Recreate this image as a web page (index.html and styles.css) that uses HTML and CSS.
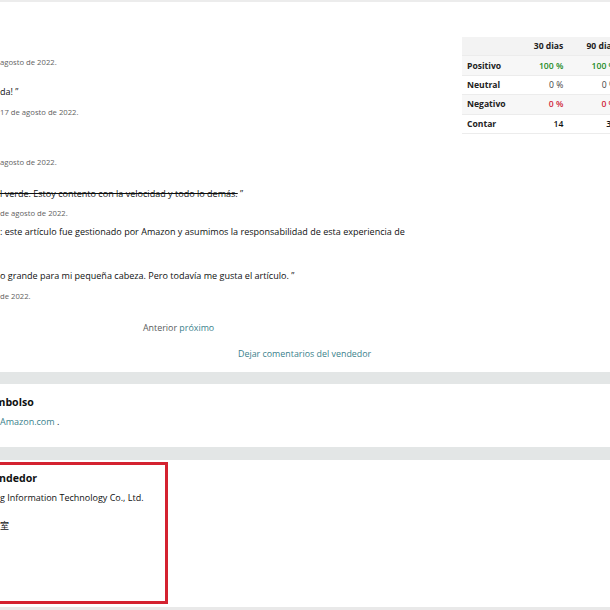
FILE: index.html
```html
<!DOCTYPE html>
<html lang="es">
<head>
<meta charset="utf-8">
<link rel="stylesheet" href="styles.css">
</head>
<body>
<div class="page">
  <section class="feedback">
    <div class="list">
      <p class="date first">agosto de 2022.</p>
      <p class="quote gap12">da! ”</p>
      <p class="date gap2">17 de agosto de 2022.</p>
      <p class="date gap32">agosto de 2022.</p>
      <p class="quote gap14"><span class="strike">l verde. Estoy contento con la velocidad y todo lo demás.</span> ”</p>
      <p class="date gap1">de agosto de 2022.</p>
      <p class="quote gap1">: este artículo fue gestionado por Amazon y asumimos la responsabilidad de esta experiencia de</p>
      <p class="quote gap26">o grande para mi pequeña cabeza. Pero todavía me gusta el artículo. ”</p>
      <p class="date gap2">de 2022.</p>
      <p class="pager"><span class="muted">Anterior</span> <a href="#" class="link">próximo</a></p>
      <p class="leave"><a href="#" class="link">Dejar comentarios del vendedor</a></p>
    </div>
    <table class="stats">
      <thead>
        <tr><th></th><th>30 dias</th><th>90 dias</th></tr>
      </thead>
      <tbody>
        <tr class="alt"><th>Positivo</th><td class="pos">100 %</td><td class="pos">100 %</td></tr>
        <tr><th>Neutral</th><td>0 %</td><td>0 %</td></tr>
        <tr class="alt"><th>Negativo</th><td class="neg">0 %</td><td class="neg">0 %</td></tr>
        <tr><th>Contar</th><td>14</td><td>37</td></tr>
      </tbody>
    </table>
  </section>
  <div class="band"></div>
  <section class="box refund">
    <h2 class="heading clip-m">mbolso</h2>
    <p class="line"><a href="#" class="link">Amazon.com</a> .</p>
  </section>
  <div class="band band2"></div>
  <section class="box seller">
    <div class="highlight">
      <h2 class="heading clip-n">ndedor</h2>
      <p class="line">g Information Technology Co., Ltd.</p>
      <p class="line cjk">室</p>
    </div>
  </section>
</div>
</body>
</html>
```

FILE: styles.css
```css
html, body {
  margin: 0;
  padding: 0;
  background: #ffffff;
}
body {
  width: 610px;
  height: 610px;
  overflow: hidden;
  font-family: "Open Sans", "Noto Sans", "Noto Sans CJK SC", sans-serif;
  color: #0f1111;
}
p, h2 { margin: 0; }
a { text-decoration: none; }
.link { color: #3a7f8c; }
.muted { color: #595c5c; }

.page {
  border-top: 2px solid #ececec;
  border-bottom: 3px solid #e9e9e9;
  height: 605px;
}

.feedback {
  display: flex;
  height: 370px;
}
.list {
  width: 462px;
  flex: none;
  display: flex;
  flex-direction: column;
}
.list p {
  height: 18px;
  line-height: 18px;
  white-space: nowrap;
}
.date { font-size: 7.7px; color: #5f6262; }
.quote { font-size: 9.05px; }
.strike { text-decoration: line-through; }
.first { margin-top: 51px; }
.gap1 { margin-top: 1px; }
.gap2 { margin-top: 2px; }
.gap12 { margin-top: 12px; }
.gap14 { margin-top: 14px; }
.gap26 { margin-top: 26px; }
.gap32 { margin-top: 32px; }
.pager {
  margin-top: 14px;
  padding-left: 143px;
  font-size: 8.9px;
}
.leave {
  margin-top: 8px;
  padding-left: 238px;
  font-size: 8.9px;
}

.stats {
  margin-top: 35px;
  align-self: flex-start;
  border-collapse: collapse;
  font-size: 8.6px;
  flex: none;
  width: 160px;
  table-layout: fixed;
}
.stats th, .stats td {
  height: 18.4px;
  padding: 0;
  border-bottom: 1px solid #ececec;
  line-height: 18px;
  white-space: nowrap;
}
.stats th:first-child { width: 55px; text-align: left; padding-left: 5px; }
.stats th:nth-child(2), .stats td:nth-child(2) { width: 40px; text-align: right; padding-right: 6px; }
.stats th:nth-child(3), .stats td:nth-child(3) { width: 46px; text-align: right; padding-right: 6px; }
.stats thead tr { background: #f3f3f3; }
.stats tr.alt { background: #f7f7f7; }
.stats th { font-weight: 700; color: #222; }
.stats td { color: #444; }
.stats td.pos { color: #1a8a24; font-weight: 600; }
.stats td.neg { color: #d0253a; font-weight: 600; }
.stats tbody tr:last-child td { color: #0f1111; font-weight: 600; }

.band {
  height: 12px;
  background: #e3e6e6;
}
.band2 { height: 13px; }

.box { background: #ffffff; }
.refund {
  height: 63px;
  padding-top: 10px;
  box-sizing: border-box;
}
.heading {
  font-size: 10.6px;
  font-weight: 700;
  line-height: 16px;
  height: 16px;
  white-space: nowrap;
}
.clip-m { text-indent: -5px; }
.clip-n { text-indent: -1px; }
.line {
  font-size: 9px;
  line-height: 16px;
  white-space: nowrap;
}
.refund .line { margin-top: 4px; }

.seller {
  padding-top: 2px;
  height: 145px;
  box-sizing: border-box;
}
.highlight {
  width: 168px;
  height: 142px;
  box-sizing: border-box;
  border: 3px solid #d42230;
  border-left: none;
  padding-top: 5px;
}
.seller .line { margin-top: 4px; }
.seller .cjk { margin-top: 12px; }
```
